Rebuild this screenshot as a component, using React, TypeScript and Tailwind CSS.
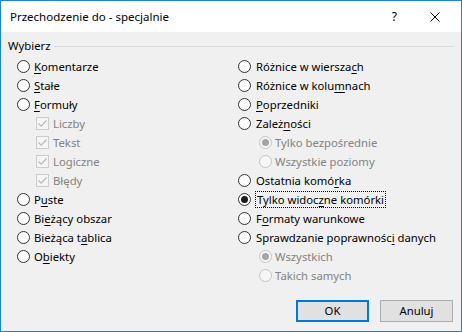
import React from "react";

const F = { fontFamily: '"Noto Sans", "Open Sans", sans-serif' };

function U({ t, i }: { t: string; i: number }) {
  return (
    <>
      {t.slice(0, i)}
      <span className="underline underline-offset-2">{t[i]}</span>
      {t.slice(i + 1)}
    </>
  );
}

function Radio({ checked = false, disabled = false }: { checked?: boolean; disabled?: boolean }) {
  return (
    <span
      className={
        "flex h-[13px] w-[13px] shrink-0 items-center justify-center rounded-full border " +
        (disabled ? "border-[#c4c4c4] bg-[#f7f7f7]" : "border-[#333333] bg-white")
      }
    >
      {checked && (
        <span
          className={
            "h-[7px] w-[7px] rounded-full " + (disabled ? "bg-[#a5a5a5]" : "bg-[#1a1a1a]")
          }
        />
      )}
    </span>
  );
}

function Check() {
  return (
    <span className="flex h-[13px] w-[13px] shrink-0 items-center justify-center border border-[#cccccc] bg-[#f5f5f5]">
      <svg width="11" height="11" viewBox="0 0 11 11">
        <path d="M1.5 5.5 L4.2 8.2 L9.5 2.5" fill="none" stroke="#b8b8b8" strokeWidth="1.2" />
      </svg>
    </span>
  );
}

function Row({ children, indent = 0 }: { children: React.ReactNode; indent?: number }) {
  return (
    <div className="flex h-[19px] items-center" style={{ paddingLeft: indent }}>
      {children}
    </div>
  );
}

export default function App() {
  return (
    <div
      className="flex h-[332px] w-[462px] flex-col border border-[#1883d7] bg-[#f0f0f0] text-[11.3px] leading-none text-black"
      style={F}
    >
      <div className="flex h-[31px] shrink-0 items-center bg-white pl-[9px]">
        <span className="text-[11.5px]">Przechodzenie do - specjalnie</span>
        <span className="ml-auto mr-[33px] text-[12px]">?</span>
        <svg className="mr-[21px]" width="10" height="10" viewBox="0 0 10 10">
          <path d="M0.5 0.5 L9.5 9.5 M9.5 0.5 L0.5 9.5" stroke="#000" strokeWidth="1" />
        </svg>
      </div>

      <div className="mt-[7px] flex h-[14px] items-center pl-[7px] pr-[7px]">
        <span>Wybierz</span>
        <span className="ml-[4px] h-px flex-1 bg-[#dadada]" />
      </div>

      <div className="mt-[4px] flex pl-[16px]">
        <div className="flex w-[221px] flex-col">
          <Row>
            <Radio />
            <span className="ml-[4px]"><U t="Komentarze" i={0} /></span>
          </Row>
          <Row>
            <Radio />
            <span className="ml-[4px]"><U t="Stałe" i={0} /></span>
          </Row>
          <Row>
            <Radio />
            <span className="ml-[4px]"><U t="Formuły" i={0} /></span>
          </Row>
          {["Liczby", "Tekst", "Logiczne", "Błędy"].map((t) => (
            <Row key={t} indent={19}>
              <Check />
              <span className="ml-[4px] text-[#838383]">{t}</span>
            </Row>
          ))}
          <Row>
            <Radio />
            <span className="ml-[4px]"><U t="Puste" i={1} /></span>
          </Row>
          <Row>
            <Radio />
            <span className="ml-[4px]"><U t="Bieżący obszar" i={2} /></span>
          </Row>
          <Row>
            <Radio />
            <span className="ml-[4px]"><U t="Bieżąca tablica" i={9} /></span>
          </Row>
          <Row>
            <Radio />
            <span className="ml-[4px]"><U t="Obiekty" i={1} /></span>
          </Row>
        </div>

        <div className="flex flex-col">
          <Row>
            <Radio />
            <span className="ml-[5px]"><U t="Różnice w wierszach" i={17} /></span>
          </Row>
          <Row>
            <Radio />
            <span className="ml-[5px]"><U t="Różnice w kolumnach" i={14} /></span>
          </Row>
          <Row>
            <Radio />
            <span className="ml-[5px]"><U t="Poprzedniki" i={0} /></span>
          </Row>
          <Row>
            <Radio />
            <span className="ml-[5px]"><U t="Zależności" i={5} /></span>
          </Row>
          <Row indent={21}>
            <Radio checked disabled />
            <span className="ml-[3px] text-[#838383]">Tylko bezpośrednie</span>
          </Row>
          <Row indent={21}>
            <Radio disabled />
            <span className="ml-[3px] text-[#838383]">Wszystkie poziomy</span>
          </Row>
          <Row>
            <Radio />
            <span className="ml-[5px]"><U t="Ostatnia komórka" i={13} /></span>
          </Row>
          <Row>
            <Radio checked />
            <span className="ml-[4px] border border-dotted border-black px-px py-[2px]">
              <U t="Tylko widoczne komórki" i={11} />
            </span>
          </Row>
          <Row>
            <Radio />
            <span className="ml-[5px]"><U t="Formaty warunkowe" i={1} /></span>
          </Row>
          <Row>
            <Radio />
            <span className="ml-[5px]"><U t="Sprawdzanie poprawności danych" i={22} /></span>
          </Row>
          <Row indent={21}>
            <Radio checked disabled />
            <span className="ml-[3px] text-[#838383]">Wszystkich</span>
          </Row>
          <Row indent={21}>
            <Radio disabled />
            <span className="ml-[3px] text-[#838383]">Takich samych</span>
          </Row>
        </div>
      </div>

      <div className="mt-auto mb-[9px] flex justify-end gap-[11px] pr-[8px]">
        <button className="flex h-[22px] w-[73px] items-center justify-center border-2 border-[#0078d7] bg-[#e1e1e1]">
          OK
        </button>
        <button className="flex h-[22px] w-[73px] items-center justify-center border border-[#adadad] bg-[#e1e1e1]">
          Anuluj
        </button>
      </div>
    </div>
  );
}
